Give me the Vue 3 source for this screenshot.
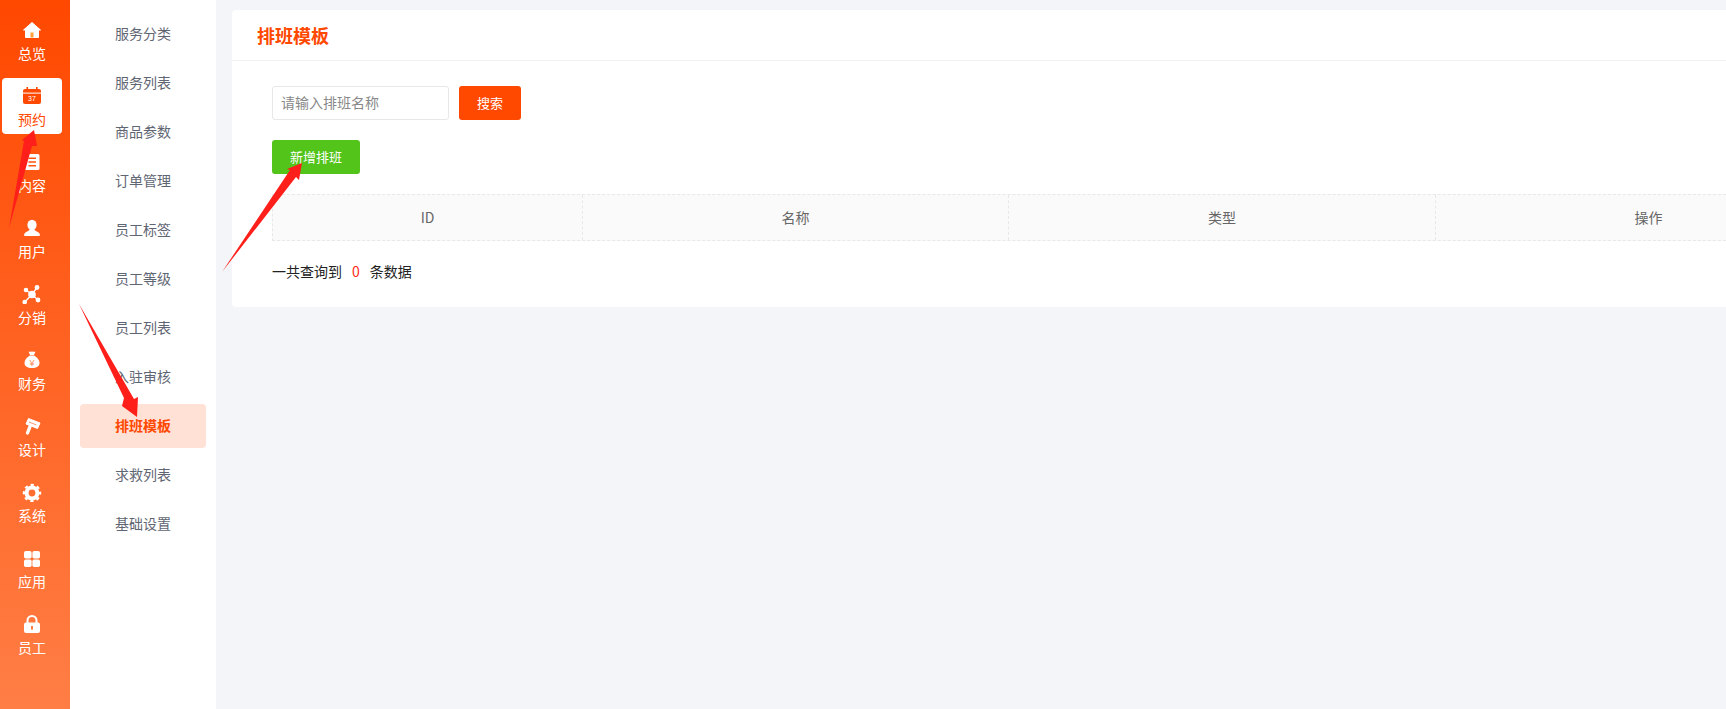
<template>
  <div class="page">
    <aside class="rail">
      <div v-for="item in railItems" :key="item.label" class="rail-item" :class="{ active: item.active }">
        <svg class="rail-icon" viewBox="0 0 20 20" width="20" height="20" v-html="item.icon"></svg>
        <span class="rail-label">{{ item.label }}</span>
      </div>
    </aside>

    <nav class="submenu">
      <div v-for="name in subItems" :key="name" class="sub-item" :class="{ current: name === '排班模板' }">
        {{ name }}
      </div>
    </nav>

    <main class="main">
      <section class="card">
        <header class="card-head">排班模板</header>
        <div class="card-body">
          <div class="search-row">
            <input class="search-input" type="text" placeholder="请输入排班名称" />
            <button class="btn btn-orange">搜索</button>
          </div>
          <button class="btn btn-green">新增排班</button>
          <div class="table-head">
            <div v-for="col in columns" :key="col" class="th">{{ col }}</div>
          </div>
          <div class="total">一共查询到<span class="count">0</span>条数据</div>
        </div>
      </section>
    </main>

    <svg class="arrows" viewBox="0 0 1726 709" width="1726" height="709">
      <polygon points="9,228 24,141 22,140 34,130 37,146 32,146" />
      <polygon points="79,304 124,398 122,406 137,417 138,397 134,399" />
      <polygon points="222,272 290,170 287,169 302,163 299,180 296,177" />
    </svg>
  </div>
</template>

<script setup>
const railItems = [
  {
    label: '总览',
    icon: '<path fill="#fff" stroke="#fff" stroke-linejoin="round" fill-rule="evenodd" stroke-width="1" d="M10 2.5 18.5 10H16.5V17.5H3.5V10H1.5ZM8.5 12.5V17.5H11.5V12.5Z"/><rect x="8.5" y="12.5" width="3" height="5" fill="#ffa03c"/>'
  },
  {
    label: '预约',
    active: true,
    icon: '<rect x="1" y="3" width="18" height="15" rx="2" fill="#ff4800"/><rect x="4.5" y="1" width="1.6" height="4" fill="#ff4800"/><rect x="14" y="1" width="1.6" height="4" fill="#ff4800"/><rect x="1" y="6.6" width="18" height="1" fill="#fff"/><text x="10" y="15.4" text-anchor="middle" font-size="7" font-family="Liberation Sans, sans-serif" fill="#fff">37</text>'
  },
  {
    label: '内容',
    icon: '<path fill="#fff" fill-rule="evenodd" d="M4 2H16A1.5 1.5 0 0 1 17.5 3.500V16.500A1.500 1.500 0 0 1 16 18H4A1.500 1.500 0 0 1 2.500 16.500V3.500A1.500 1.500 0 0 1 4 2ZM6.500 5.500V7H14V5.500ZM6.500 9.300V10.800H14V9.300ZM6.500 13V14.500H14V13Z"/>'
  },
  {
    label: '用户',
    icon: '<ellipse cx="10" cy="7" rx="4.600" ry="5.200" fill="#fff"/><path fill="#fff" d="M7.500 11.500C7 13.500 2.500 13.500 2 17A1.200 1.200 0 0 0 3 18H17A1.200 1.200 0 0 0 18 17C17.500 13.500 13 13.500 12.500 11.500Z"/>'
  },
  {
    label: '分销',
    icon: '<g stroke="#fff" stroke-width="1.300"><path d="M10 10.500 4 6M10 10.500 15 3.500M10 10.500 2.700 18M10 10.500 16 16"/></g><g fill="#fff"><circle cx="10" cy="10.500" r="3.800"/><circle cx="4" cy="6" r="2.300"/><circle cx="15" cy="3.500" r="2.400"/><circle cx="2.700" cy="18" r="2.300"/><circle cx="16" cy="16" r="2.400"/></g>'
  },
  {
    label: '财务',
    icon: '<path fill="#fff" d="M6.500 1.500C8 2.300 9 1.300 10 1.500 11 1.300 12 2.300 13.500 1.500L12 5H8Z"/><path fill="#fff" d="M8 5.500H12C15 7 17.500 10 17.500 13 17.500 16.500 14.500 18 10 18 5.500 18 2.500 16.500 2.500 13 2.500 10 5 7 8 5.500Z"/><text x="10" y="15.500" text-anchor="middle" font-size="9" font-family="Liberation Sans, sans-serif" fill="#ff8a55">¥</text>'
  },
  {
    label: '设计',
    icon: '<path fill="#fff" stroke="#fff" stroke-linejoin="round" d="M6.500 2.500 18 7 15.500 12.500 4 8Z"/><path fill="none" stroke="#ff7a40" stroke-width="0.800" d="M7 6 14.500 9"/><path fill="none" stroke="#fff" stroke-width="3.400" stroke-linecap="round" d="M8 10.500 5.500 17"/>'
  },
  {
    label: '系统',
    icon: '<circle cx="10" cy="11" r="5.400" fill="none" stroke="#fff" stroke-width="4"/><circle cx="10" cy="11" r="8" fill="none" stroke="#fff" stroke-width="2.400" stroke-dasharray="3.140 3.140" stroke-dashoffset="1.570"/>'
  },
  {
    label: '应用',
    icon: '<g fill="#fff"><rect x="2" y="3" width="7.600" height="7.600" rx="1.800"/><rect x="10.400" y="3" width="7.600" height="7.600" rx="1.800"/><rect x="2" y="11.400" width="7.600" height="7.600" rx="1.800"/><rect x="10.400" y="11.400" width="7.600" height="7.600" rx="1.800"/></g>'
  },
  {
    label: '员工',
    icon: '<path fill="none" stroke="#fff" stroke-width="2" d="M5.500 9V6.500A4.500 4.500 0 0 1 14.500 6.500V9"/><path fill="#fff" fill-rule="evenodd" d="M4 8.500H16A2 2 0 0 1 18 10.500V17A2 2 0 0 1 16 19H4A2 2 0 0 1 2 17V10.500A2 2 0 0 1 4 8.500ZM9 12V15.500H11V12Z"/>'
  }
]

const subItems = [
  '服务分类',
  '服务列表',
  '商品参数',
  '订单管理',
  '员工标签',
  '员工等级',
  '员工列表',
  '入驻审核',
  '排班模板',
  '求救列表',
  '基础设置'
]

const columns = ['ID', '名称', '类型', '操作']
</script>

<style>
html,
body {
  margin: 0;
  overflow: hidden;
}
</style>

<style scoped>
.page {
  position: relative;
  display: flex;
  height: 709px;
  overflow: hidden;
  background: #f4f5f9;
  font-family: "Noto Sans CJK SC", "Liberation Sans", sans-serif;
  font-size: 14px;
}

.rail {
  flex: none;
  width: 70px;
  box-sizing: border-box;
  padding: 12px 8px 0 2px;
  display: flex;
  flex-direction: column;
  gap: 10px;
  background: linear-gradient(180deg, #ff4800 0%, #ff7e45 100%);
}
.rail-item {
  height: 56px;
  box-sizing: border-box;
  padding-top: 8px;
  display: flex;
  flex-direction: column;
  align-items: center;
  border-radius: 4px;
  color: #fff;
}
.rail-item.active {
  background: #fff;
  color: #ff4800;
}
.rail-icon {
  display: block;
}
.rail-label {
  margin-top: 3px;
  line-height: 20px;
}

.submenu {
  flex: none;
  width: 146px;
  box-sizing: border-box;
  padding: 12px 10px 0;
  display: flex;
  flex-direction: column;
  gap: 5px;
  background: #fff;
}
.sub-item {
  height: 44px;
  line-height: 42px;
  text-align: center;
  border-radius: 4px;
  color: #5f6673;
}
.sub-item.current {
  background: #ffe1d6;
  color: #ff4800;
  font-weight: 700;
}

.main {
  flex: 1;
  min-width: 0;
  padding: 10px 0 0 16px;
}
.card {
  width: 1700px;
  height: 297px;
  background: #fff;
  border-radius: 4px;
}
.card-head {
  height: 50px;
  line-height: 50px;
  padding-left: 25px;
  border-bottom: 1px solid #f2f2f2;
  color: #ff4800;
  font-size: 18px;
  font-weight: 700;
}
.card-body {
  padding: 25px 40px;
}

.search-row {
  display: flex;
  gap: 10px;
  margin-bottom: 20px;
}
.search-input {
  width: 177px;
  height: 34px;
  box-sizing: border-box;
  padding: 0 8px 2px;
  border: 1px solid #e8e8e8;
  border-radius: 3px;
  outline: none;
  font: inherit;
}
.search-input::placeholder {
  color: #888;
}
.btn {
  display: block;
  height: 34px;
  padding: 0 0 2px;
  border: none;
  border-radius: 3px;
  color: #fff;
  font: inherit;
  font-size: 13px;
}
.btn-orange {
  width: 62px;
  background: #ff4800;
}
.btn-green {
  width: 88px;
  background: #52c41a;
}

.table-head {
  display: grid;
  grid-template-columns: 310px 426px 427px 426px;
  width: 1589px;
  height: 47px;
  box-sizing: border-box;
  margin-top: 20px;
  border: 1px dashed #e8e8e8;
  background: #fafafa;
  color: #666;
}
.th {
  line-height: 45px;
  text-align: center;
  border-right: 1px dashed #e8e8e8;
}

.total {
  margin-top: 20px;
  line-height: 20px;
  color: #222;
}
.count {
  margin: 0 10px;
  color: #ff2a1a;
}

.arrows {
  position: absolute;
  left: 0;
  top: 0;
  pointer-events: none;
}
.arrows polygon {
  fill: #ff1f1a;
}
</style>
